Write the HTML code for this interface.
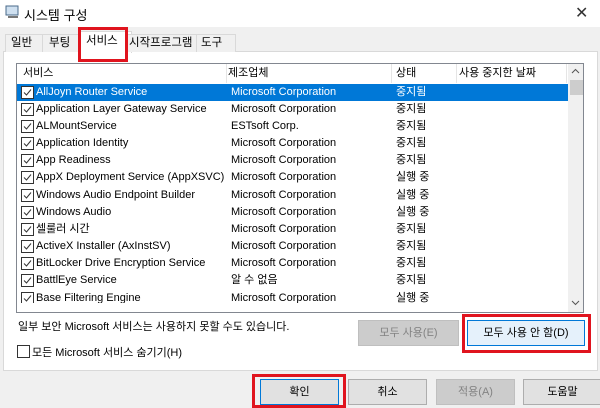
<!DOCTYPE html><html><head><meta charset="utf-8"><style>
body{margin:0;width:600px;height:405px;background:#f0f0f0;position:relative;overflow:hidden;font-family:"Liberation Sans","Noto Sans CJK KR",sans-serif;font-size:11px;color:#000}
.a{position:absolute;white-space:nowrap}
.row{position:absolute;left:17px;width:551px;height:17px;line-height:17px}
.cb{position:absolute;left:4px;top:2px;width:11px;height:11px;border:1px solid #333;background:#fff}
.btn{position:absolute;border:1px solid #adadad;background:#e1e1e1;text-align:center;line-height:24px;height:24px}
.red{position:absolute;border:3px solid #e0141e}
</style></head><body>
<div class="a" style="left:0;top:0;width:600px;height:27px;background:#fff"></div>
<svg class="a" style="left:5px;top:5px" width="16" height="14"><rect x="1" y="1" width="12" height="9" fill="#cfe0f0" stroke="#4a6a8a"/><rect x="3" y="11" width="10" height="2" fill="#777"/></svg>
<div class="a" style="left:24px;top:5px;font-size:13px">시스템 구성</div>
<div class="a" style="left:575px;top:3px;font-size:16px;color:#333">✕</div>
<div class="a" style="left:3px;top:51px;width:593px;height:318px;background:#fff;border:1px solid #d9d9d9"></div>
<div class="a" style="left:5px;top:34px;width:37px;height:17px;border:1px solid #d9d9d9;border-bottom:none;background:#f0f0f0;padding-left:5px;line-height:17px;font-size:11.5px">일반</div>
<div class="a" style="left:42px;top:34px;width:38px;height:17px;border:1px solid #d9d9d9;border-bottom:none;background:#f0f0f0;padding-left:6px;line-height:17px;font-size:11.5px">부팅</div>
<div class="a" style="left:80px;top:31px;width:45px;height:21px;border:1px solid #d9d9d9;border-bottom:none;background:#fff;padding-left:5px;line-height:19px;font-size:11.5px">서비스</div>
<div class="a" style="left:126px;top:34px;width:70px;height:17px;border:1px solid #d9d9d9;border-bottom:none;background:#f0f0f0;padding-left:2px;line-height:17px;font-size:11.5px">시작프로그램</div>
<div class="a" style="left:196px;top:34px;width:34px;height:17px;border:1px solid #d9d9d9;border-bottom:none;background:#f0f0f0;padding-left:4px;line-height:17px;font-size:11.5px">도구</div>
<div class="red" style="left:78px;top:27px;width:44px;height:29px"></div>
<div class="a" style="left:16px;top:63px;width:566px;height:248px;border:1px solid #828790;background:#fff;overflow:hidden">
<div class="a" style="left:0;top:0;width:551px;height:19px;line-height:19px">
<span class="a" style="left:6px">서비스</span><span class="a" style="left:211px">제조업체</span><span class="a" style="left:379px">상태</span><span class="a" style="left:442px">사용 중지한 날짜</span>
<span class="a" style="left:209px;top:0;width:1px;height:19px;background:#e5e5e5"></span><span class="a" style="left:374px;top:0;width:1px;height:19px;background:#e5e5e5"></span><span class="a" style="left:439px;top:0;width:1px;height:19px;background:#e5e5e5"></span><span class="a" style="left:549px;top:0;width:1px;height:19px;background:#e5e5e5"></span></div>
<div class="a" style="left:551px;top:0;width:15px;height:248px;background:#f0f0f0"></div>
<svg class="a" style="left:554px;top:4px" width="9" height="6"><path d="M1 5L4.5 1.5L8 5" fill="none" stroke="#555"/></svg>
<div class="a" style="left:553px;top:16px;width:13px;height:15px;background:#cdcdcd"></div>
<svg class="a" style="left:554px;top:236px" width="9" height="6"><path d="M1 1L4.5 4.5L8 1" fill="none" stroke="#555"/></svg>
</div>
<div id="rows"></div>
<script>
var d=[["AllJoyn Router Service","Microsoft Corporation","중지됨"],["Application Layer Gateway Service","Microsoft Corporation","중지됨"],["ALMountService","ESTsoft Corp.","중지됨"],["Application Identity","Microsoft Corporation","중지됨"],["App Readiness","Microsoft Corporation","중지됨"],["AppX Deployment Service (AppXSVC)","Microsoft Corporation","실행 중"],["Windows Audio Endpoint Builder","Microsoft Corporation","실행 중"],["Windows Audio","Microsoft Corporation","실행 중"],["셀룰러 시간","Microsoft Corporation","중지됨"],["ActiveX Installer (AxInstSV)","Microsoft Corporation","중지됨"],["BitLocker Drive Encryption Service","Microsoft Corporation","중지됨"],["BattlEye Service","알 수 없음","중지됨"],["Base Filtering Engine","Microsoft Corporation","실행 중"]];
var h="";for(var i=0;i<d.length;i++){var t=83.5+i*17.17;var s=i==0?"background:#0078d7;color:#fff;":"";
h+='<div class="row" style="top:'+t+'px;'+s+'"><span class="cb"><svg style="position:absolute;left:1px;top:1px" width="9" height="9"><path d="M1 4.5L3.5 7L8 1.5" fill="none" stroke="#333" stroke-width="1"/></svg></span><span class="a" style="left:19px">'+d[i][0]+'</span><span class="a" style="left:214px">'+d[i][1]+'</span><span class="a" style="left:379px">'+d[i][2]+'</span></div>';}
document.getElementById("rows").innerHTML=h;
</script>
<div class="a" style="left:17px;top:303px;width:550px;height:9px;background:#fff;z-index:2"></div>
<div class="a" style="left:18px;top:318px">일부 보안 Microsoft 서비스는 사용하지 못할 수도 있습니다.</div>
<div class="btn" style="left:358px;top:320px;width:99px;background:#ccc;border-color:#bfbfbf;color:#838383">모두 사용(E)</div>
<div class="btn" style="left:467px;top:320px;width:116px;background:#e5f1fb;border-color:#0078d7">모두 사용 안 함(D)</div>
<div class="red" style="left:462px;top:314px;width:123px;height:33px"></div>
<div class="a" style="left:17px;top:345px;width:11px;height:11px;border:1px solid #333;background:#fff"></div>
<div class="a" style="left:32px;top:344px">모든 Microsoft 서비스 숨기기(H)</div>
<div class="btn" style="left:260px;top:379px;width:77px;border-color:#0078d7">확인</div>
<div class="red" style="left:252px;top:374px;width:88px;height:28px"></div>
<div class="btn" style="left:348px;top:379px;width:77px">취소</div>
<div class="btn" style="left:436px;top:379px;width:77px;background:#ccc;border-color:#bfbfbf;color:#838383">적용(A)</div>
<div class="btn" style="left:523px;top:379px;width:77px">도움말</div>
</body></html>
